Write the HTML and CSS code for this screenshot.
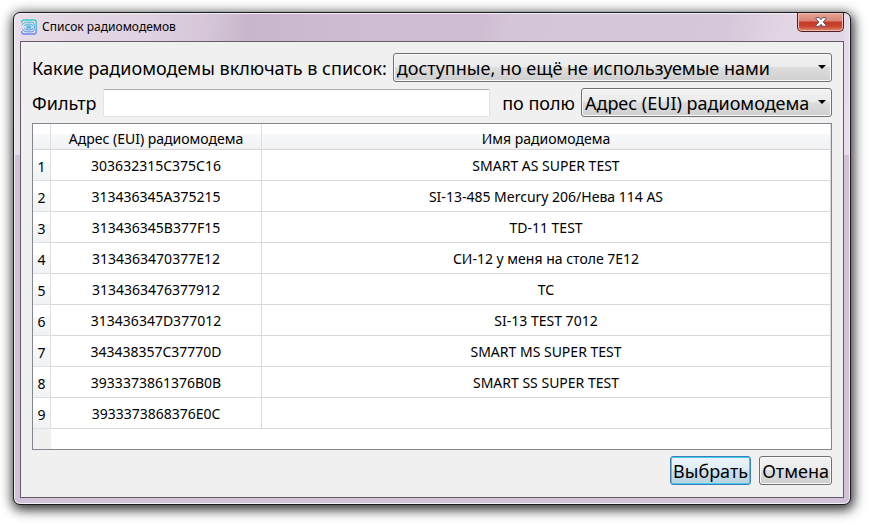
FILE: index.html
```html
<!DOCTYPE html>
<html lang="ru">
<head>
    <meta charset="UTF-8">
    <title>Список радиомодемов</title>
    <meta name="viewport" content="width=device-width, initial-scale=1.0">
    <link rel="stylesheet" href="styles.css">
</head>
<body>
    <div class="window">
        <div class="titlebar">
            <svg class="app-icon" viewBox="0 0 16 16" fill="none" stroke="url(#ig)">
                <defs>
                    <linearGradient id="ig" x1="0" y1="0" x2="0" y2="16" gradientUnits="userSpaceOnUse">
                        <stop offset="0" stop-color="#35d3c4"/>
                        <stop offset="0.5" stop-color="#43aee6"/>
                        <stop offset="1" stop-color="#6a82ee"/>
                    </linearGradient>
                </defs>
                <path d="M0.8 4.2V3Q0.8 1 3 1H13Q15.2 1 15.2 3V13Q15.2 15 13 15H3Q0.8 15 0.8 13V12" stroke-width="1.3"/>
                <path d="M1 6.2Q3 3.2 5.5 3.2H10.5Q13.3 3.2 13.3 6V10Q13.3 12.8 10.5 12.8H5.5Q3 12.8 1 9.8"/>
                <path d="M3.2 7Q4.2 5.2 6 5.2H10Q11.6 5.2 11.6 7M3.2 9Q4.2 10.8 6 10.8H10Q11.6 10.8 11.6 9"/>
                <path d="M5.2 7.2H10.2M5.2 8.9H10.2M7.7 7V9" stroke-width="1.2"/>
            </svg>
            <h1>Список радиомодемов</h1>
            <button class="close-btn" type="button" aria-label="Закрыть">
                <svg viewBox="0 0 12 10">
                    <path d="M1 .7H4.3L6 2.7 7.7 .7H11V1.8L8.2 5 11 8.2V9.3H7.7L6 7.3 4.3 9.3H1V8.2L3.8 5 1 1.8Z" fill="#fff" stroke="#5b5468"/>
                </svg>
            </button>
        </div>
        <form class="content">
            <div class="row">
                <label for="kind">Какие радиомодемы включать в список:</label>
                <span class="combo combo-wide">
                    <select id="kind"><option>доступные, но ещё не используемые нами</option></select>
                </span>
            </div>
            <div class="row">
                <label for="filter">Фильтр</label>
                <input id="filter" type="text">
                <label class="field-label" for="field">по полю</label>
                <span class="combo">
                    <select id="field"><option>Адрес (EUI) радиомодема</option></select>
                </span>
            </div>
            <div class="grid">
                <table>
                    <thead><tr><th class="num"></th><th class="addr">Адрес (EUI) радиомодема</th><th>Имя радиомодема</th></tr></thead>
                    <tbody>
                        <tr><th>1</th><td>303632315C375C16</td><td>SMART AS SUPER TEST</td></tr>
                        <tr><th>2</th><td>313436345A375215</td><td>SI-13-485 Mercury 206/Нева 114 AS</td></tr>
                        <tr><th>3</th><td>313436345B377F15</td><td>TD-11 TEST</td></tr>
                        <tr><th>4</th><td>3134363470377E12</td><td>СИ-12 у меня на столе 7E12</td></tr>
                        <tr><th>5</th><td>3134363476377912</td><td>ТС</td></tr>
                        <tr><th>6</th><td>313436347D377012</td><td>SI-13 TEST 7012</td></tr>
                        <tr><th>7</th><td>343438357C37770D</td><td>SMART MS SUPER TEST</td></tr>
                        <tr><th>8</th><td>3933373861376B0B</td><td>SMART SS SUPER TEST</td></tr>
                        <tr><th>9</th><td>3933373868376E0C</td><td></td></tr>
                    </tbody>
                </table>
            </div>
            <div class="buttons">
                <button class="btn btn-default" type="button">Выбрать</button>
                <button class="btn" type="button">Отмена</button>
            </div>
        </form>
    </div>
</body>
</html>
```
FILE: styles.css
```css
* {
    box-sizing: border-box;
}
body {
    display: flex;
    min-height: 100vh;
    margin: 0;
    padding: 12px 18px 19px 13px;
    background: #fff;
    color: #000;
    font-family: 'Noto Sans', sans-serif;
    font-size: 18px;
}
.window {
    flex: 1;
    min-width: 0;
    display: flex;
    flex-direction: column;
    padding: 0 6px 6px 6px;
    border: 1px solid #1e1a22;
    border-radius: 7px;
    background:
        linear-gradient(#e9e0ec, #e6dde9) 0 0 / 6px 142px no-repeat,
        linear-gradient(#e6dbe8, #e6dde9) 100% 0 / 6px 142px no-repeat,
        linear-gradient(100deg, #e7dce8 0%, #e0d2e1 16%, #d4c4d7 24%, #c8b7cc 28%, #cebdd2 40%, #cfbed3 56%, #d5c5d8 59%, #d7c7da 85%, #e2d6e4 92%) 0 0 / 100% 30px no-repeat,
        #d2c2d7;
    box-shadow: inset 0 0 0 1px #f3edf5, 1px 3px 12px 2px rgba(0, 0, 0, 0.8);
}
.titlebar {
    display: flex;
    align-items: center;
    height: 28px;
}
.app-icon {
    width: 16px;
    height: 16px;
    margin-left: 1px;
}
.titlebar h1 {
    flex: 1;
    margin: 0 0 0 5px;
    font-size: 12px;
    font-weight: 400;
    line-height: 16px;
}
.close-btn {
    align-self: flex-start;
    display: flex;
    align-items: center;
    justify-content: center;
    width: 47px;
    height: 19px;
    padding: 0;
    border: 1px solid #4e1c1c;
    border-top: 0;
    border-radius: 0 0 5px 5px;
    background: linear-gradient(#e8a799, #d98272 45%, #c33a24 50%, #cb4630 75%, #e08a72);
    box-shadow: inset 0 0 0 1px #eebbb0;
}
.close-btn svg {
    width: 12px;
    height: 10px;
}
.content {
    flex: 1;
    display: flex;
    flex-direction: column;
    gap: 6px;
    padding: 11px 11px 12px 11px;
    border: 1px solid #645a68;
    background: #f0f0f0;
}
.row {
    display: flex;
    align-items: center;
    gap: 6px;
    height: 29px;
    white-space: nowrap;
}
.combo {
    position: relative;
}
.combo-wide {
    flex: 1;
    min-width: 0;
}
.combo::after {
    content: "";
    position: absolute;
    top: 12px;
    right: 6px;
    border: 4px solid transparent;
    border-top-color: #000;
    border-bottom: 0;
    pointer-events: none;
}
select,
.btn {
    height: 29px;
    border: 1px solid #707070;
    border-radius: 3px;
    background: linear-gradient(#f2f2f2, #ebebeb 48%, #dddddd 50%, #cfcfcf);
    box-shadow: inset 0 0 0 1px #fafafa;
    color: #000;
    font: inherit;
    line-height: 24px;
}
select {
    display: block;
    width: 100%;
    padding: 0 21px 0 3px;
    appearance: none;
}
input {
    flex: 1;
    min-width: 0;
    height: 28px;
    padding: 0 4px;
    border: 1px solid #e2e3ea;
    border-top-color: #abadb3;
    border-radius: 2px;
    background: #fff;
    font: inherit;
}
.field-label {
    margin-left: 6px;
}
.grid {
    flex: 1;
    border: 1px solid #828790;
    background: linear-gradient(90deg, #f0f0f0 18px, #fff 18px);
}
table {
    width: 100%;
    table-layout: fixed;
    border-collapse: separate;
    border-spacing: 0;
    background: #fff;
    font-size: 14px;
    line-height: 20px;
    text-align: center;
}
th,
td {
    height: 31px;
    padding: 2px 0 0 0;
    border-right: 1px solid #d8d8d8;
    border-bottom: 1px solid #d8d8d8;
    font-weight: 400;
}
th {
    border-color: #dfe0e3;
    background: linear-gradient(#fff 40%, #f7f8fa 40%, #f1f2f4);
}
thead th {
    height: 26px;
    padding-top: 4px;
    border-bottom-color: #d5d5d5;
}
tbody th {
    padding-top: 4px;
}
.num {
    width: 18px;
}
.addr {
    width: 211px;
}
.buttons {
    display: flex;
    justify-content: flex-end;
    gap: 8px;
}
.btn {
    padding: 0 2px;
}
.btn-default {
    border-color: #3c7fb1;
    background: linear-gradient(#eaf3f8, #e0eef6 48%, #cde1ec 50%, #b9d3e2);
    box-shadow: inset 0 0 0 1px #45c8f2;
}
```
